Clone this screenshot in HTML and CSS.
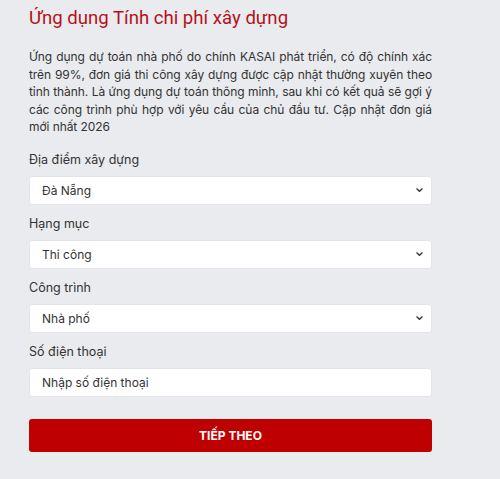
FILE: index.html
```html
<!DOCTYPE html>
<html lang="vi">
<head>
<meta charset="utf-8">
<title>Ứng dụng Tính chi phí xây dựng</title>
<link rel="stylesheet" href="styles.css">
</head>
<body>
<div class="page">
  <h1 class="title">Ứng dụng Tính chi phí xây dựng</h1>
  <p class="intro">Ứng dụng dự toán nhà phố do chính KASAI phát triển, có độ chính xác trên 99%, đơn giá thi công xây dựng được cập nhật thường xuyên theo tỉnh thành. Là ứng dụng dự toán thông minh, sau khi có kết quả sẽ gợi ý các công trình phù hợp với yêu cầu của chủ đầu tư. Cập nhật đơn giá mới nhất 2026</p>
  <form class="form">
    <div class="field">
      <label class="label">Địa điểm xây dựng</label>
      <div class="control">
        <span class="value">Đà Nẵng</span>
        <svg class="chev" width="9" height="6" viewBox="0 0 9 6"><path d="M1.5 1.5 L4.5 4.3 L7.5 1.5" fill="none" stroke="#333" stroke-width="1.3"/></svg>
      </div>
    </div>
    <div class="field">
      <label class="label">Hạng mục</label>
      <div class="control">
        <span class="value">Thi công</span>
        <svg class="chev" width="9" height="6" viewBox="0 0 9 6"><path d="M1.5 1.5 L4.5 4.3 L7.5 1.5" fill="none" stroke="#333" stroke-width="1.3"/></svg>
      </div>
    </div>
    <div class="field">
      <label class="label">Công trình</label>
      <div class="control">
        <span class="value">Nhà phố</span>
        <svg class="chev" width="9" height="6" viewBox="0 0 9 6"><path d="M1.5 1.5 L4.5 4.3 L7.5 1.5" fill="none" stroke="#333" stroke-width="1.3"/></svg>
      </div>
    </div>
    <div class="field">
      <label class="label">Số điện thoại</label>
      <div class="control">
        <span class="value">Nhập số điện thoại</span>
      </div>
    </div>
    <div class="button">TIẾP THEO</div>
  </form>
</div>
</body>
</html>
```
FILE: styles.css
```css
html, body {
  margin: 0;
  padding: 0;
  background: #e9ebee;
}
body {
  font-family: Inter, "Noto Sans", sans-serif;
  color: #333;
}
.page {
  width: 403px;
  margin-left: 29px;
  padding-top: 5px;
}
.title {
  margin: 0;
  font-family: Roboto, "Liberation Sans", sans-serif;
  font-size: 18.6px;
  line-height: 26px;
  font-weight: 400;
  color: #b5121b;
}
.intro {
  margin: 17px 0 0;
  font-size: 12px;
  line-height: 17.5px;
  letter-spacing: -0.08px;
  text-align: justify;
  color: #333;
}
.form {
  margin-top: 14px;
  display: flex;
  flex-direction: column;
}
.field {
  display: flex;
  flex-direction: column;
  margin-bottom: 9px;
}
.label {
  font-size: 12.5px;
  line-height: 20px;
  margin-bottom: 6px;
  color: #333;
}
.control {
  height: 29px;
  box-sizing: border-box;
  background: #fff;
  border: 1px solid #e3e5e8;
  border-radius: 3px;
  display: flex;
  align-items: center;
  justify-content: space-between;
  padding: 0 7px 0 12px;
  font-size: 12px;
  color: #333;
}
.chev {
  display: block;
}
.button {
  margin-top: 13px;
  height: 33px;
  background: #bf0000;
  border-radius: 3px;
  color: #fff;
  font-weight: 700;
  font-size: 12px;
  display: flex;
  align-items: center;
  justify-content: center;
}
```
